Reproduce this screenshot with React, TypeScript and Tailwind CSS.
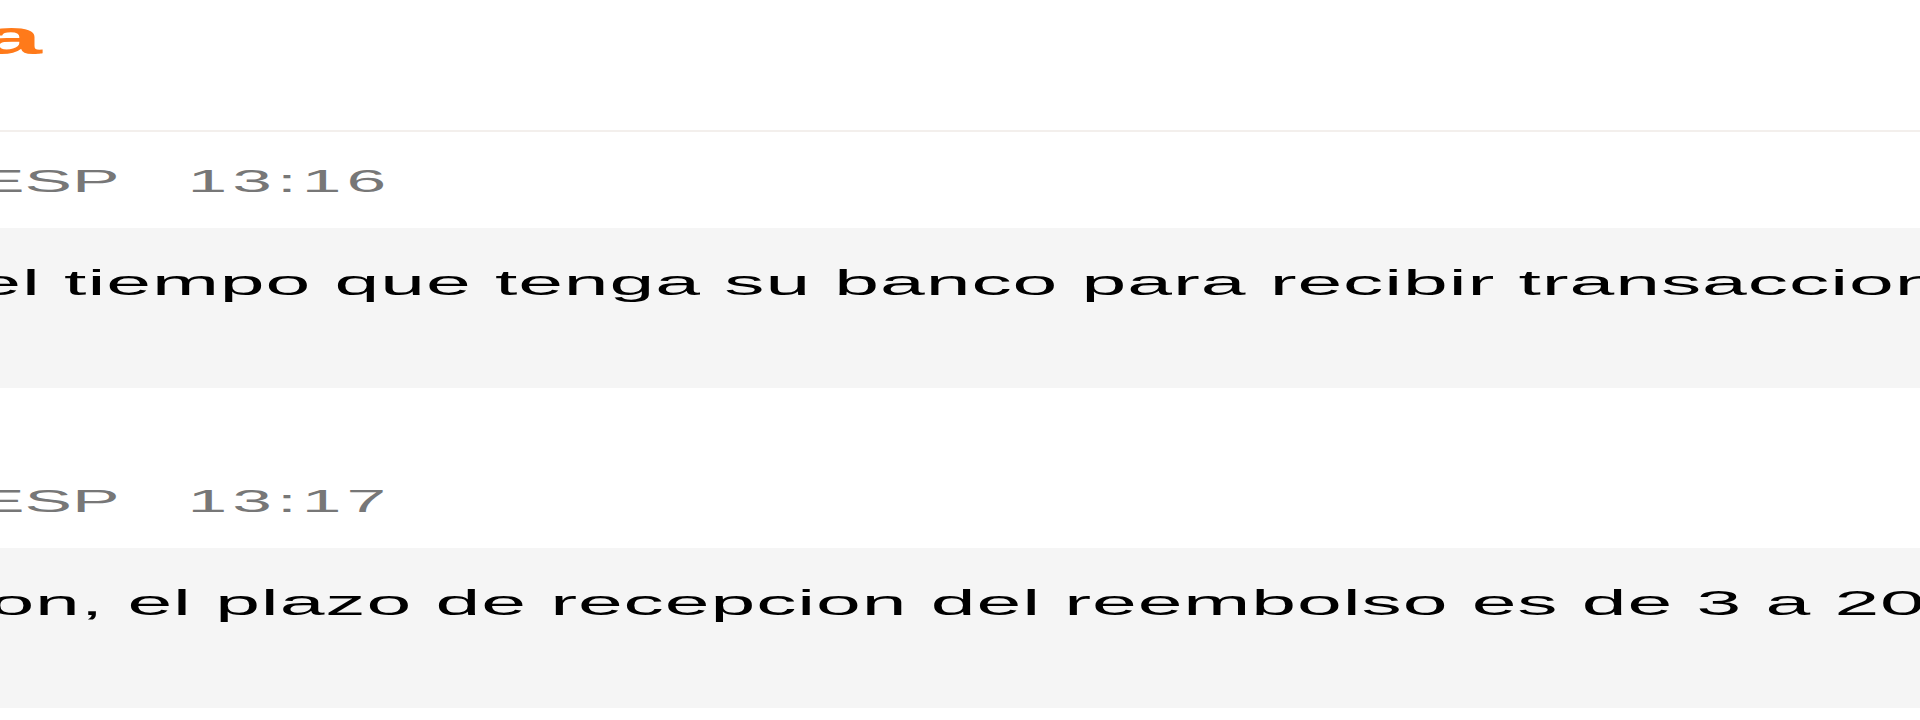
const messages = [
  {
    lang: 'ESP',
    time: '13:16',
    text: 'el tiempo que tenga su banco para recibir transacciones',
    offset: 'ml-[-10.3px]',
  },
  {
    lang: 'ESP',
    time: '13:17',
    text: 'on, el plazo de recepcion del reembolso es de 3 a 20 dias',
    offset: 'ml-[-4.6px]',
  },
];

export default function App() {
  return (
    <div className="w-[1920px] h-[720px] overflow-hidden bg-white font-['Liberation_Sans',Arial,sans-serif]">
      {/* cabecera */}
      <header className="h-[132px] border-b-2 border-[#f3efec] pt-[14px]">
        <div className="origin-left scale-x-230 whitespace-nowrap">
          <span className="ml-[-8.5px] text-[48px] leading-none font-bold text-[#ff7a1a]">a</span>
        </div>
      </header>

      {/* mensajes */}
      <div className="flex flex-col gap-[98px] pt-[34px]">
        {messages.map((m) => (
          <div key={m.time}>
            <div className="origin-left scale-x-230 whitespace-nowrap text-[31px] leading-none text-[#777777]">
              <span className="ml-[-10px]">{m.lang}</span>
              <span className="ml-[29.5px] tracking-[2.2px]">{m.time}</span>
            </div>
            <div className="mt-[31px] h-[160px] bg-[#f5f5f5] pt-[37px] overflow-hidden">
              <div className="origin-left scale-x-230 whitespace-nowrap text-[35px] leading-none tracking-[0.4px] text-black">
                <span className={m.offset}>{m.text}</span>
              </div>
            </div>
          </div>
        ))}
      </div>
    </div>
  );
}
